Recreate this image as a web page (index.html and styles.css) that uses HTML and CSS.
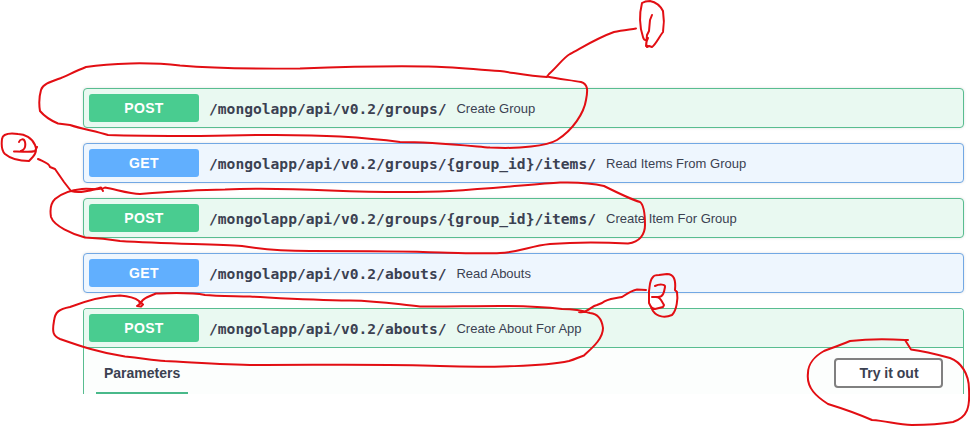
FILE: index.html
```
<!DOCTYPE html>
<html lang="en">
<head>
<meta charset="utf-8">
<title>API operations</title>
<link rel="stylesheet" href="styles.css">
</head>
<body>
<main class="operations">
  <section class="op post"><div class="summary"><span class="method">POST</span><span class="path">/mongolapp/api/v0.2/groups/</span><span class="desc">Create Group</span></div></section>
  <section class="op get"><div class="summary"><span class="method">GET</span><span class="path">/mongolapp/api/v0.2/groups/{group_id}/items/</span><span class="desc">Read Items From Group</span></div></section>
  <section class="op post"><div class="summary"><span class="method">POST</span><span class="path">/mongolapp/api/v0.2/groups/{group_id}/items/</span><span class="desc">Create Item For Group</span></div></section>
  <section class="op get"><div class="summary"><span class="method">GET</span><span class="path">/mongolapp/api/v0.2/abouts/</span><span class="desc">Read Abouts</span></div></section>
  <section class="op post open">
    <div class="summary"><span class="method">POST</span><span class="path">/mongolapp/api/v0.2/abouts/</span><span class="desc">Create About For App</span></div>
    <div class="details"><h4 class="tab">Parameters</h4><button class="try">Try it out</button></div>
  </section>
</main>
<svg class="ink" viewBox="0 0 970 426" aria-hidden="true">
  <!-- first marker -->
  <path d="M547 77C530 76 515 73 500 71C470 69 445 66 425 66.500C390 66 340 67 300 68.500C250 69 210 68 180 65.500C150 62 110 63 86 67C76 71 68 75 61 78C50 82 43 84 41 90C39 97 39 105 40 111C45 117 52 121 58 123.500L70 125C82 129 95 131 108 135C135 136 170 136 200 136C240 135 300 134 340 136.500C365 138 385 140 400 142C430 142 460 145 490 147.500C520 149 547 146 557 140C573 130 584 113 586 100C588 90 588 84 581 82C570 80 558 79 547 76.500L549 74C558 66 563 58 570 54C583 47 597 38 614 32C622 30 630 29.500 636 28.500"/>
  <path d="M642 3C639 15 640 28 643 37C644 41 647 41 648 38C646 42 646 45 647 47L649 46L652 47C656 44 659 37 663 32C664 26 664 17 663 11C660 5 655 2 650 1Q645 1 642 3M652 15L650 20L649 31L647 35L646 46"/>
  <!-- second marker -->
  <path d="M2 139C1 147 2 151 5 154C12 160 22 161 29 161C34 156 38 152 35 145C32 138 25 134 18 134Q3 132 2 139M19 142C20 139 24 138 25 142C26 147 24 150 21 151M14 151.500C22 151 29 153 35 151L37 147M38 159C44 162 49 163 50 167L55 169L64 182L71 191C80 194 92 190 101 187.500L103 191"/>
  <path d="M55 199C62 193 71 190 82 189C91 188 99 191 105 187.500C118 190 130 194 140 194C165 192 190 190 225 189.500C260 188 295 189 330 190.500C370 192 410 193 450 191C500 188 534 184 560 182.500C580 182 596 184 604 186C614 191 630 199 640 202C644 205 645 216 645 225C645 234 640 242 628 243.500C600 242 575 242 550 244C530 246 520 252 500 253C485 254 465 253 440 252.500C400 251 355 251 310 251C285 251 260 249 242 246C215 244 170 244 120 241C108 239 97 238 85 237.500C72 234 54 226 51 217Q49 205 55 199"/>
  <!-- third marker -->
  <path d="M140 304L139 301C134 297 127 296 120 295.500C104 296 83 302 70 307C59 309 55 312 54 321C52 332 53 336 60 339C80 346 100 353 125 356.500C143 358 150 360 165 361C190 362 225 365 260 365C330 365 390 364 440 366C490 368 545 366 569 361C576 359 579 357 584 355.500C592 348 603 339 603 328C602 320 599 314 590 313C584 311 575 309 562 309C545 307 525 306 500 306C470 306 440 307 420 306.500C395 304 380 301 350 300.500C310 300 280 298 250 296.500C230 296 215 296 205 295C190 292 170 293 156 293.500C147 297 142 299 141 303L137 306L141 306.500L143 304.500L139 301M579 312C587 314 591 306 597 305L602 303C608 298 612 299 622 297C628 293 633 290 637 289.500L646 290"/>
  <path d="M653 277C649 281 650 287 649 291L649 303L653 311C657 317 665 318 672 315C677 310 678 298 677 292L675 290C676 280 674 274 667 274L659 275Q654 275 653 277M655 286C659 284 666 284 665 287C664 293 663 297 658 297H652C657 297 658 296 661 300L664 305L663 307L655 309Q651 308 650 305"/>
  <!-- button marker -->
  <path d="M908 340L905 340C889 339 867 339 850 341C838 346 829 349 824 351C815 356 808 364 808 373C806 388 817 397 828 404C841 408 858 414 872 420C888 421 897 425 912 425C928 425 942 424 953 422C968 417 970 407 969 389C969 374 961 362 950 358C939 355 923 351 911 349.500L905 340"/>
</svg>
</body>
</html>
```
FILE: styles.css
```
* { box-sizing: border-box; }
body { margin: 0; height: 426px; overflow: hidden; position: relative; background: #fff; color: #3b4151; font-family: "Liberation Sans", Arial, sans-serif; }
.operations { display: flex; flex-direction: column; gap: 15px; width: 881px; margin-left: 83px; padding-top: 88px; }
.op { border: 1px solid var(--accent); border-radius: 4px; background: var(--tint); }
.post { --accent: #49cc90; --line: #58bd90; --tint: #e9f9f1; }
.get { --accent: #61affe; --line: #72a8e4; --tint: #eef6fe; }
.op { border-color: var(--line); box-shadow: 0 0 3px rgba(0, 0, 0, .12); }
.summary { display: flex; align-items: center; height: 38px; padding: 0 5px; white-space: nowrap; }
.method { width: 110px; height: 28px; border-radius: 3px; background: var(--accent); color: #fff; font-size: 14px; font-weight: 700; line-height: 28px; text-align: center; letter-spacing: .35px; }
.path { margin-left: 10px; padding-top: 1px; font: 700 14.62px/20px "DejaVu Sans Mono", monospace; }
.desc { margin-left: 10px; font-size: 13px; letter-spacing: 0; }
.open { height: 86px; border-bottom: 0; border-radius: 4px 4px 0 0; background: #fcfefd; box-shadow: none; }
.open .summary { height: 39px; background: var(--tint); border-bottom: 1px solid var(--line); border-radius: 3px 3px 0 0; }
.details { display: flex; justify-content: space-between; align-items: flex-start; height: 46px; padding: 0 20px 0 12px; }
.tab { width: 92px; height: 46px; margin: 0; padding-left: 8px; border-bottom: 2px solid #49b98a; font-size: 14px; line-height: 50px; }
.try { width: 109px; height: 30px; margin-top: 10px; padding: 0 0 0 1px; border: 2px solid #808080; border-radius: 4px; background: #fff; color: #3b4151; font: 700 14px "Liberation Sans", Arial, sans-serif; }
.ink { position: absolute; inset: 0; width: 970px; height: 426px; fill: none; stroke: #e20e13; stroke-width: 2; stroke-linecap: round; stroke-linejoin: round; pointer-events: none; }
```
